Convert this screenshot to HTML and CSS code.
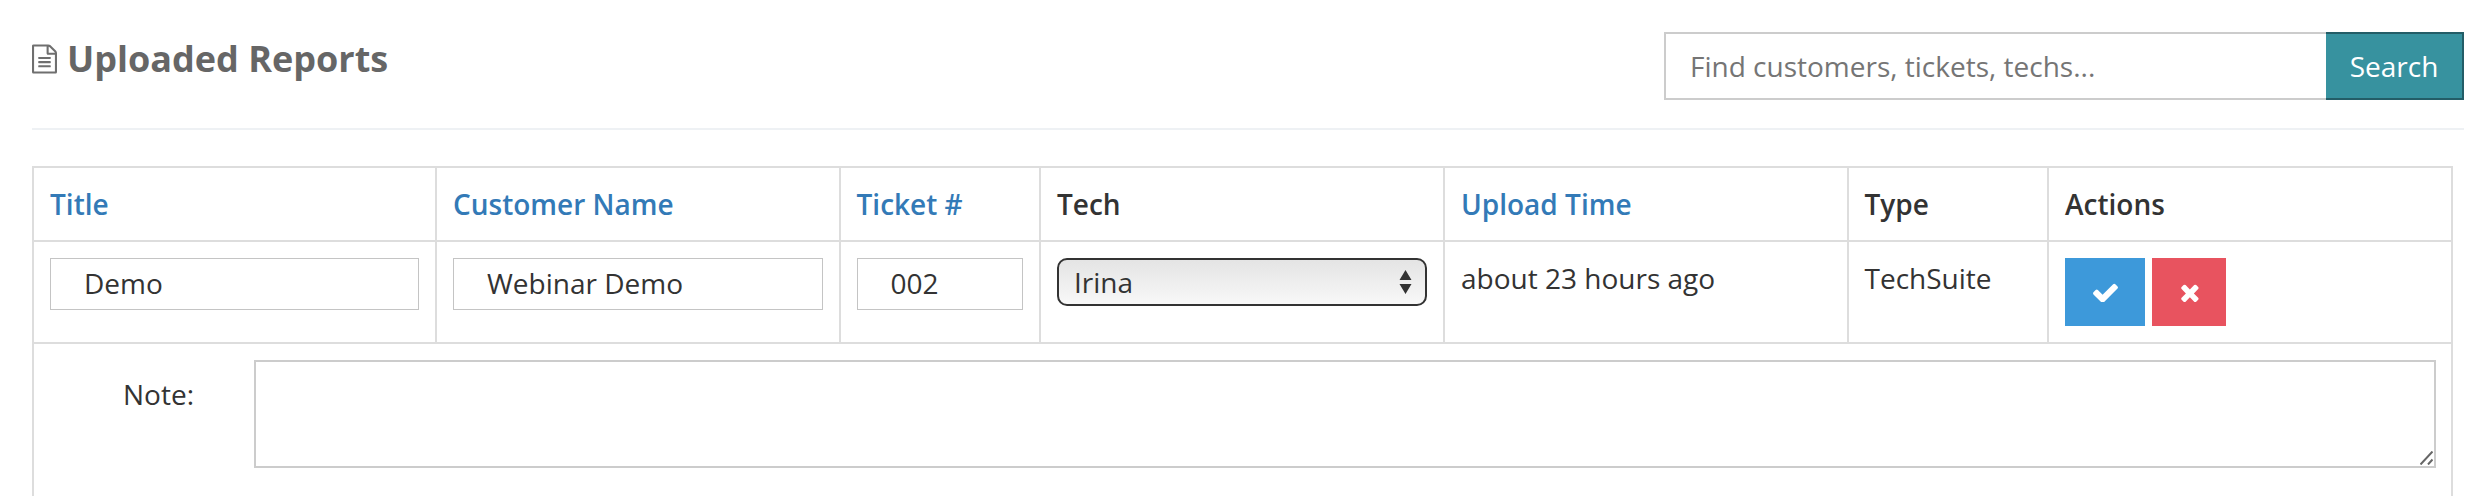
FILE: index.html
```html
<!DOCTYPE html>
<html lang="en">
<head>
<meta charset="utf-8">
<title>Uploaded Reports</title>
<link rel="stylesheet" href="styles.css">
</head>
<body>
<main class="page">
  <header class="page-head">
    <h1 class="page-title">
      <svg class="title-icon" viewBox="128 0 1536 1792" aria-hidden="true"><path d="M1596 380q28 28 48 76t20 88v1152q0 40-28 68t-68 28h-1344q-40 0-68-28t-28-68v-1600q0-40 28-68t68-28h896q40 0 88 20t76 48zm-444-244v376h376q-10-29-22-41l-313-313q-12-12-41-22zm384 1528v-1024h-416q-40 0-68-28t-28-68v-416h-768v1536h1280zm-1024-864q0-14 9-23t23-9h704q14 0 23 9t9 23v64q0 14-9 23t-23 9h-704q-14 0-23-9t-9-23v-64zm736 224q14 0 23 9t9 23v64q0 14-9 23t-23 9h-704q-14 0-23-9t-9-23v-64q0-14 9-23t23-9h704zm0 256q14 0 23 9t9 23v64q0 14-9 23t-23 9h-704q-14 0-23-9t-9-23v-64q0-14 9-23t23-9h704z"/></svg>
      Uploaded Reports
    </h1>
    <form class="search">
      <input class="search-input" type="text" placeholder="Find customers, tickets, techs...">
      <button class="search-btn" type="button">Search</button>
    </form>
  </header>

  <table class="reports">
    <colgroup>
      <col class="c-title"><col class="c-customer"><col class="c-ticket"><col class="c-tech"><col class="c-time"><col class="c-type"><col class="c-actions">
    </colgroup>
    <thead>
      <tr>
        <th><a href="#">Title</a></th>
        <th><a href="#">Customer Name</a></th>
        <th><a href="#">Ticket #</a></th>
        <th>Tech</th>
        <th><a href="#">Upload Time</a></th>
        <th>Type</th>
        <th>Actions</th>
      </tr>
    </thead>
    <tbody>
      <tr>
        <td><input class="cell-input" type="text" value="Demo"></td>
        <td><input class="cell-input" type="text" value="Webinar Demo"></td>
        <td><input class="cell-input" type="text" value="002"></td>
        <td>
          <div class="select-wrap">
            <select class="tech-select"><option>Irina</option></select>
            <svg class="select-arrows" viewBox="0 0 12 24" aria-hidden="true"><path d="M6 0l6 10H0zM6 24L0 14h12z"/></svg>
          </div>
        </td>
        <td>about 23 hours ago</td>
        <td>TechSuite</td>
        <td>
          <div class="actions">
            <button class="act act-ok" type="button"><svg class="check" viewBox="120 300 1552 1150" aria-hidden="true"><path d="M1671 566q0 40-28 68l-724 724-136 136q-28 28-68 28t-68-28l-136-136-362-362q-28-28-28-68t28-68l136-136q28-28 68-28t68 28l294 295 656-657q28-28 68-28t68 28l136 136q28 28 28 68z"/></svg></button>
            <button class="act act-no" type="button"><svg class="cross" viewBox="250 250 1240 1300" aria-hidden="true"><path d="M1490 1322q0 40-28 68l-136 136q-28 28-68 28t-68-28l-294-294-294 294q-28 28-68 28t-68-28l-136-136q-28-28-28-68t28-68l294-294-294-294q-28-28-28-68t28-68l136-136q28-28 68-28t68 28l294 294 294-294q28-28 68-28t68 28l136 136q28 28 28 68t-28 68l-294 294 294 294q28 28 28 68z"/></svg></button>
          </div>
        </td>
      </tr>
    </tbody>
  </table>

  <section class="note-row">
    <label class="note-label" for="note">Note:</label>
    <div class="note-field">
      <textarea class="note-input" id="note"></textarea>
      <svg class="note-grip" viewBox="0 0 13 14" aria-hidden="true"><path d="M0.5 13.5L12.5 0.5M8 13.5L12.5 8.5"/></svg>
    </div>
  </section>
</main>
</body>
</html>
```
FILE: styles.css
```css
* { box-sizing: border-box; }
html, body { margin: 0; height: 496px; overflow: hidden; background: #fff; }
body { font-family: "Open Sans", "Liberation Sans", sans-serif; font-size: 28px; color: #333; }
.page { padding: 32px 24px 0 32px; }

.page-head {
  display: flex;
  justify-content: space-between;
  align-items: flex-start;
  height: 98px;
  border-bottom: 2px solid #eef1f4;
}
.page-title {
  margin: 5px 0 0;
  display: flex;
  align-items: center;
  gap: 10px;
  font-size: 36px;
  line-height: 44px;
  font-weight: 700;
  color: #666;
}
.title-icon { width: 25px; height: 30px; fill: #6f6f6f; }

.search { display: flex; height: 68px; }
.search-input {
  width: 662px;
  height: 68px;
  padding: 0 24px;
  border: 2px solid #ccc;
  border-right: 0;
  font: 28px "Open Sans", sans-serif;
  color: #333;
  outline: 0;
}
.search-input::placeholder { color: #757575; opacity: 1; }
.search-btn {
  width: 138px;
  height: 68px;
  border: 2px solid #235d67;
  border-width: 2px 2px 2px 0;
  background: #37929f;
  color: #fff;
  font: 28px "Open Sans", sans-serif;
  padding: 0;
}

.reports {
  margin-top: 36px;
  width: 2419px;
  table-layout: fixed;
  border-collapse: collapse;
}
.c-title { width: 403px; }
.c-customer { width: 403.5px; }
.c-ticket { width: 200.5px; }
.c-tech { width: 404px; }
.c-time { width: 403.5px; }
.c-type { width: 200.5px; }
.c-actions { width: 404px; }
.reports th, .reports td {
  border: 2px solid #ddd;
  padding: 15px 16px;
  vertical-align: top;
  text-align: left;
}
.reports th {
  height: 74px;
  font-weight: 600;
  color: #333;
  line-height: 42px;
}
.reports th a { color: #337ab7; text-decoration: none; }
.reports td {
  height: 101px;
  padding-top: 16px;
  line-height: 40px;
  border-bottom: 0;
}

.cell-input {
  display: block;
  width: 100%;
  height: 52px;
  padding: 0 33px 2px;
  border: 1px solid #c4c4c4;
  font: 28px "Open Sans", sans-serif;
  color: #333;
  outline: 0;
}
.select-wrap { position: relative; }
.tech-select {
  display: block;
  width: 100%;
  height: 48px;
  padding: 0 15px;
  appearance: none;
  border: 2px solid #333;
  border-radius: 10px;
  background: linear-gradient(#e4e4e4, #f8f8f8);
  font: 28px "Open Sans", sans-serif;
  color: #333;
}
.select-arrows {
  position: absolute;
  right: 15px;
  top: 12px;
  width: 13px;
  height: 24px;
  fill: #333;
  pointer-events: none;
}

.actions { display: flex; gap: 7px; }
.act {
  height: 68px;
  border: 0;
  padding: 0;
  display: flex;
  align-items: center;
  justify-content: center;
}
.act svg { fill: #fff; }
.act-ok { width: 80px; background: #3d99da; }
.act-no { width: 74px; background: #e8535f; }
.check { width: 25px; height: 19px; }
.cross { width: 19px; height: 19px; }

.note-row {
  display: flex;
  width: 2421px;
  height: 160px;
  border: 2px solid #ddd;
  border-bottom: 0;
}
.note-label { width: 220px; padding: 32px 0 0 89px; line-height: 36px; color: #333; }
.note-field { position: relative; width: 2182px; height: 108px; margin-top: 16px; }
.note-input {
  display: block;
  width: 100%;
  height: 100%;
  border: 2px solid #ccc;
  outline: 0;
  background: #fff;
  resize: none;
}
.note-grip {
  position: absolute;
  right: 3px;
  bottom: 3px;
  width: 13px;
  height: 14px;
  fill: none;
  stroke: #666;
  stroke-width: 2;
  pointer-events: none;
}
```
